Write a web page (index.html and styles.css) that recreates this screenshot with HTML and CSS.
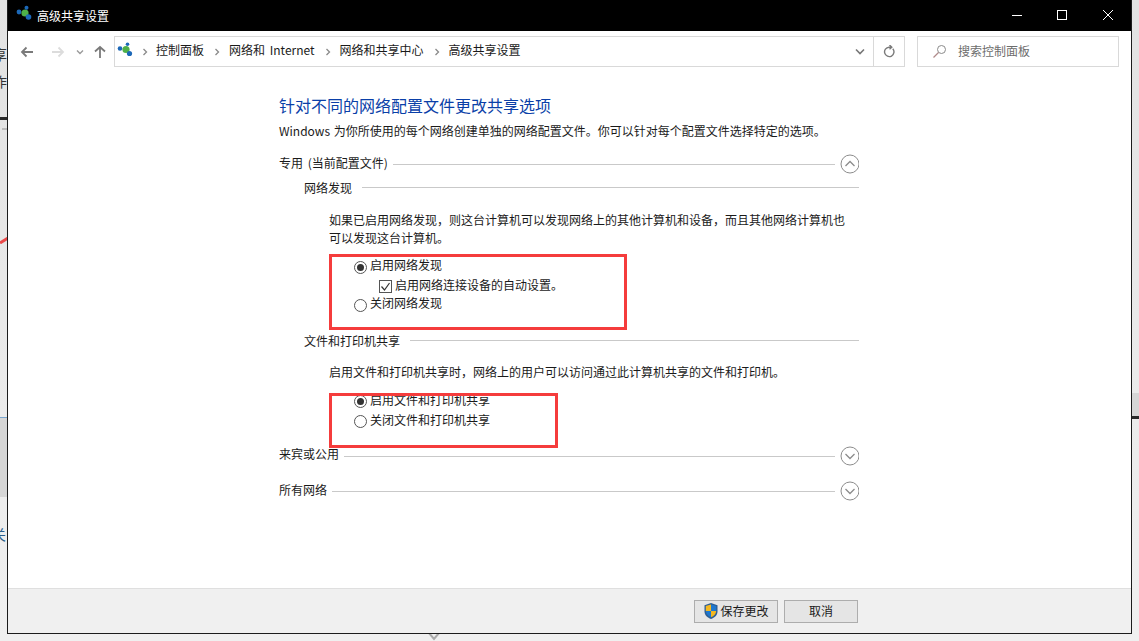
FILE: index.html
```html
<!DOCTYPE html>
<html lang="zh-CN">
<head>
<meta charset="utf-8">
<title>高级共享设置</title>
<link rel="stylesheet" href="styles.css">
</head>
<body>
<div class="desktop">
  <span class="sl sl-a">享</span>
  <span class="sl sl-b">作</span>
  <span class="sl sl-c">关</span>
  <span class="sl sl-d">5</span>
  <span class="sl sl-e">0</span>
  <div class="band band-l"></div>
  <div class="band band-r"></div>
  <div class="tick"></div>
  <div class="grey grey-l"><div class="blue-line"></div></div>
  <div class="grey grey-r"></div>
  <svg class="red-stroke" width="8" height="8" viewBox="0 0 8 8"><path d="M0 7L8 2" stroke="#ea4a4a" stroke-width="3" fill="none"/></svg>
  <svg class="peek" width="16" height="8" viewBox="0 0 16 8"><path d="M3 0l5 6 5-6" stroke="#aaa" stroke-width="2" fill="none"/></svg>

  <div class="window">
    <header class="titlebar">
      <svg class="net-icon" width="17" height="17" viewBox="0 0 17 17"><circle cx="3" cy="7" r="2.4" fill="#1c68b8"/><circle cx="9" cy="8" r="3.6" fill="#4fb049"/><circle cx="10.5" cy="2.8" r="2" fill="#1c68b8"/><circle cx="12.5" cy="12" r="2.8" fill="#1c68b8"/></svg>
      <span class="title">高级共享设置</span>
      <div class="win-btns">
        <svg width="46" height="31" viewBox="0 0 46 31"><path d="M19 15.500h10" stroke="#fff" fill="none"/></svg>
        <svg width="46" height="31" viewBox="0 0 46 31"><rect x="18.500" y="10.500" width="9" height="9" stroke="#fff" fill="none"/></svg>
        <svg width="46" height="31" viewBox="0 0 46 31"><path d="M18 10l10 10M28 10l-10 10" stroke="#fff" fill="none"/></svg>
      </div>
    </header>

    <nav class="navbar">
      <svg class="nav-ic back" width="16" height="16" viewBox="0 0 16 16"><path d="M14 8H3M7.500 3.500L3 8l4.500 4.500" stroke="#7a7a7a" stroke-width="1.800" fill="none"/></svg>
      <svg class="nav-ic fwd" width="16" height="16" viewBox="0 0 16 16"><path d="M2 8h11M8.500 3.500L13 8l-4.500 4.500" stroke="#dcdcdc" stroke-width="1.800" fill="none"/></svg>
      <svg class="nav-ic drop" width="8" height="6" viewBox="0 0 8 6"><path d="M1 1.500l3 3 3-3" stroke="#9a9a9a" stroke-width="1.400" fill="none"/></svg>
      <svg class="nav-ic up" width="14" height="16" viewBox="0 0 14 16"><path d="M7 14V3M2 7.500L7 3l5 4.500" stroke="#7a7a7a" stroke-width="1.800" fill="none"/></svg>
      <div class="address">
        <svg class="addr-icon" width="17" height="17" viewBox="0 0 17 17"><circle cx="3" cy="6.500" r="2.300" fill="#1c68b8"/><circle cx="9" cy="7.500" r="3.600" fill="#4fb049"/><circle cx="10.500" cy="2.300" r="1.800" fill="#1c68b8"/><circle cx="12.500" cy="11.500" r="2.600" fill="#1c68b8"/></svg>
        <svg class="crumb-sep" width="6" height="8" viewBox="0 0 6 8"><path d="M1.500 1l3 3-3 3" stroke="#8a8a8a" stroke-width="1.300" fill="none"/></svg>
        <span class="crumb">控制面板</span>
        <svg class="crumb-sep" width="6" height="8" viewBox="0 0 6 8"><path d="M1.500 1l3 3-3 3" stroke="#8a8a8a" stroke-width="1.300" fill="none"/></svg>
        <span class="crumb">网络和 Internet</span>
        <svg class="crumb-sep" width="6" height="8" viewBox="0 0 6 8"><path d="M1.500 1l3 3-3 3" stroke="#8a8a8a" stroke-width="1.300" fill="none"/></svg>
        <span class="crumb">网络和共享中心</span>
        <svg class="crumb-sep" width="6" height="8" viewBox="0 0 6 8"><path d="M1.500 1l3 3-3 3" stroke="#8a8a8a" stroke-width="1.300" fill="none"/></svg>
        <span class="crumb">高级共享设置</span>
        <div class="addr-end">
          <svg width="10" height="7" viewBox="0 0 10 7"><path d="M1 1.500l4 4 4-4" stroke="#777" stroke-width="1.600" fill="none"/></svg>
        </div>
        <div class="addr-refresh">
          <svg width="12" height="13" viewBox="0 0 12 13"><path d="M9.800 3.800A4.700 4.700 0 1 1 6 2.200H8M6.500 0L8.800 2.200 6.500 4.200" stroke="#7a7a7a" stroke-width="1.400" fill="none"/></svg>
        </div>
      </div>
      <div class="search">
        <svg width="15" height="15" viewBox="0 0 15 15"><circle cx="9.500" cy="5.500" r="4" stroke="#8a8a8a" fill="none"/><path d="M6.500 8.500L1.500 13.500" stroke="#b08a8a" stroke-width="1.200"/></svg>
        <span>搜索控制面板</span>
      </div>
    </nav>

    <main class="content">
      <h1>针对不同的网络配置文件更改共享选项</h1>
      <p class="intro">Windows 为你所使用的每个网络创建单独的网络配置文件。你可以针对每个配置文件选择特定的选项。</p>

      <div class="sec-head sec-first">
        <span>专用 (当前配置文件)</span><i class="rule"></i>
        <svg class="chev" width="20" height="20" viewBox="0 0 20 20"><circle cx="10" cy="10" r="9" stroke="#8c8c8c" fill="#fff"/><path d="M5.500 12L10 7.500l4.500 4.500" stroke="#8c8c8c" stroke-width="1.300" fill="none"/></svg>
      </div>

      <div class="sub-head head-net"><span>网络发现</span><i class="rule"></i></div>
      <p class="desc desc-net">如果已启用网络发现，则这台计算机可以发现网络上的其他计算机和设备，而且其他网络计算机也<br>可以发现这台计算机。</p>
      <div class="opt opt-1"><b class="radio on"></b><span>启用网络发现</span></div>
      <div class="opt check-row"><b class="check"><svg width="13" height="13" viewBox="0 0 13 13"><path d="M2.500 6.500l3 3.500 5-7" stroke="#333" stroke-width="1.200" fill="none"/></svg></b><span>启用网络连接设备的自动设置。</span></div>
      <div class="opt opt-3"><b class="radio"></b><span>关闭网络发现</span></div>

      <div class="sub-head head-file"><span>文件和打印机共享</span><i class="rule"></i></div>
      <p class="desc desc-file">启用文件和打印机共享时，网络上的用户可以访问通过此计算机共享的文件和打印机。</p>
      <div class="opt opt-4"><b class="radio on"></b><span>启用文件和打印机共享</span></div>
      <div class="opt opt-5"><b class="radio"></b><span>关闭文件和打印机共享</span></div>

      <div class="sec-head sec-guest">
        <span>来宾或公用</span><i class="rule"></i>
        <svg class="chev" width="20" height="20" viewBox="0 0 20 20"><circle cx="10" cy="10" r="9" stroke="#8c8c8c" fill="#fff"/><path d="M5.500 8L10 12.500 14.500 8" stroke="#8c8c8c" stroke-width="1.300" fill="none"/></svg>
      </div>
      <div class="sec-head sec-all">
        <span>所有网络</span><i class="rule"></i>
        <svg class="chev" width="20" height="20" viewBox="0 0 20 20"><circle cx="10" cy="10" r="9" stroke="#8c8c8c" fill="#fff"/><path d="M5.500 8L10 12.500 14.500 8" stroke="#8c8c8c" stroke-width="1.300" fill="none"/></svg>
      </div>
    </main>

    <footer class="footer">
      <button class="btn btn-save">
        <svg width="16" height="18" viewBox="0 0 16 18"><path d="M8 1l6.500 2.200v6c0 4-3 6.500-6.500 7.800C4.500 15.700 1.500 13.200 1.500 9.200v-6z" fill="#2f5f94"/><path d="M8 2.500v6.500H2.800V3.900z" fill="#f5b81f"/><path d="M8 2.500v6.500h5.200V3.900z" fill="#1f78cf"/><path d="M8 9v6.300C5 14.100 2.900 12 2.800 9z" fill="#1f78cf"/><path d="M8 9v6.300c3-1.200 5.100-3.300 5.200-6.300z" fill="#f5b81f"/></svg>
        <span>保存更改</span>
      </button>
      <button class="btn btn-cancel">取消</button>
    </footer>

    <div class="mark mark-1"></div>
    <div class="mark mark-2"></div>
  </div>
</div>
</body>
</html>
```
FILE: styles.css
```css
* { box-sizing: border-box; }
html, body { margin: 0; padding: 0; }
body {
  width: 1139px;
  height: 641px;
  overflow: hidden;
  font-family: "Noto Sans CJK SC", "Liberation Sans", sans-serif;
  font-size: 12px;
  color: #1a1a1a;
}
.desktop {
  position: relative;
  width: 1139px;
  height: 641px;
  overflow: hidden;
  background: linear-gradient(#e2e2e2, #f0f0f0);
}

/* desktop slivers */
.sl { position: absolute; left: -7px; font-size: 14px; line-height: 16px; color: #333; }
.sl-a { top: 46px; }
.sl-b { top: 73px; }
.sl-c { top: 526px; left: -8px; color: #2b5d8a; }
.sl-d { top: 447px; left: -2px; color: #999; }
.sl-e { top: 476px; left: -2px; color: #b09a9a; }
.band { position: absolute; height: 3px; background: #2a2a2a; }
.band-l { left: 0; top: 117px; width: 8px; }
.band-r { left: 1132px; top: 416px; width: 7px; }
.tick { position: absolute; left: 2px; top: 128px; width: 6px; height: 2px; background: #bbb; }
.grey { position: absolute; background: #d6d6d6; }
.grey-l { left: 0; top: 417px; width: 8px; height: 80px; }
.grey-r { left: 1132px; top: 393px; width: 7px; height: 23px; }
.blue-line { height: 1px; background: #7aa6cf; }
.red-stroke { position: absolute; left: 0; top: 236px; }
.peek { position: absolute; left: 426px; top: 633px; }

/* window */
.window {
  position: absolute;
  left: 7px;
  top: 0;
  width: 1125px;
  height: 634px;
  display: flex;
  flex-direction: column;
  background: #fff;
  border: 1px solid #1c1c1c;
  border-top: 0;
}
.titlebar {
  flex: none;
  height: 31px;
  display: flex;
  align-items: center;
  background: #000;
  color: #fff;
  padding-left: 8px;
}
.net-icon { margin-top: -4px; margin-right: 4px; }
.title { line-height: 31px; }
.win-btns { margin-left: auto; display: flex; }
.win-btns svg { display: block; }

/* nav */
.navbar {
  flex: none;
  height: 41px;
  display: flex;
  align-items: center;
}
.nav-ic { flex: none; }
.back { margin-left: 11px; }
.fwd { margin-left: 15px; }
.drop { margin-left: 10px; }
.up { margin-left: 9px; }
.address {
  width: 791px;
  height: 31px;
  margin-left: 7px;
  display: flex;
  align-items: center;
  border: 1px solid #d9d9d9;
  padding-left: 2px;
}
.addr-icon { flex: none; margin-top: -3px; }
.crumb-sep { flex: none; margin: 0 9px 0 10px; }
.addr-icon + .crumb-sep { margin: 0 8px; }
.crumb { white-space: nowrap; word-spacing: 2px; padding-bottom: 4px; }
.addr-end { margin-left: auto; width: 40px; height: 100%; display: flex; align-items: center; justify-content: center; padding-left: 13px; }
.addr-refresh {
  width: 31px;
  height: 100%;
  border-left: 1px solid #d9d9d9;
  display: flex;
  align-items: center;
  justify-content: center;
}
.search {
  width: 202px;
  height: 31px;
  margin-left: 12px;
  border: 1px solid #d9d9d9;
  display: flex;
  align-items: center;
  padding-left: 14px;
  gap: 11px;
  color: #6d6d6d;
}
.search span { padding-bottom: 2px; }

/* content */
.content {
  flex: 1;
  padding: 22px 0 0 271px;
  width: 851px;
  overflow: hidden;
}
h1 {
  margin: 0;
  font-size: 16px;
  font-weight: 400;
  line-height: 22px;
  color: #0a3fa8;
}
.intro { margin: 6px 0 0; line-height: 17px; word-spacing: 1px; }
.sec-head, .sub-head {
  display: flex;
  align-items: center;
  height: 20px;
  white-space: nowrap;
}
.sec-head > span { padding-bottom: 4px; word-spacing: 2px; }
.rule { flex: 1; height: 1px; background: #c9c9c9; }
.sub-head .rule { margin-left: 10px; }
.sec-head .rule { margin-left: 5px; }
.chev { flex: none; margin-left: 5px; margin-right: -1px; }
.sec-first { margin-top: 15px; }
.sub-head { padding-left: 25px; }
.head-net { margin-top: 3px; }
.desc { margin: 0; padding-left: 50px; line-height: 18px; }
.desc-net { margin-top: 14px; }
.opt {
  display: flex;
  align-items: center;
  height: 18px;
  padding-left: 75px;
}
.radio {
  flex: none;
  width: 13px;
  height: 13px;
  margin-right: 3px;
  border: 1px solid #555;
  border-radius: 50%;
  background: #fff;
  position: relative;
  transform: translateY(2px);
}
.radio.on::after {
  content: "";
  position: absolute;
  left: 2px;
  top: 2px;
  width: 7px;
  height: 7px;
  border-radius: 50%;
  background: #333;
}
.check {
  flex: none;
  display: block;
  width: 13px;
  height: 13px;
  margin-right: 3px;
  border: 1px solid #555;
  position: relative;
  transform: translateY(1px);
}
.check svg { position: absolute; left: -1px; top: -1px; }
.opt-1 { margin-top: 8px; }
.check-row { padding-left: 100px; margin-top: 2px; }
.opt-3 { margin-top: 0; }
.opt-1 .radio, .opt-3 .radio { transform: translateY(3px); }
.check-row .check { transform: translateY(2px); }
.head-file { margin-top: 19px; }
.desc-file { margin-top: 13px; }
.opt-4 { margin-top: 9px; }
.opt-5 { margin-top: 2px; }
.sec-guest { margin-top: 18px; }
.sec-guest > span { padding-bottom: 6px; }
.sec-all { margin-top: 15px; }

/* footer */
.footer {
  flex: none;
  height: 45px;
  background: #f0f0f0;
  border-top: 1px solid #dfdfdf;
  display: flex;
  align-items: center;
  padding-left: 686px;
  gap: 6px;
}
.btn {
  height: 23px;
  font: inherit;
  color: #1a1a1a;
  background: #e5e5e5;
  border: 1px solid #adadad;
  border-radius: 0;
  padding: 0 0 1px;
  display: flex;
  align-items: center;
  justify-content: center;
}
.btn-save { width: 84px; gap: 1px; }
.btn-cancel { width: 74px; }

/* annotations */
.mark { position: absolute; border: 3px solid #f53c3c; }
.mark-1 { left: 321px; top: 254px; width: 298px; height: 76px; }
.mark-2 { left: 321px; top: 393px; width: 229px; height: 55px; }
```
